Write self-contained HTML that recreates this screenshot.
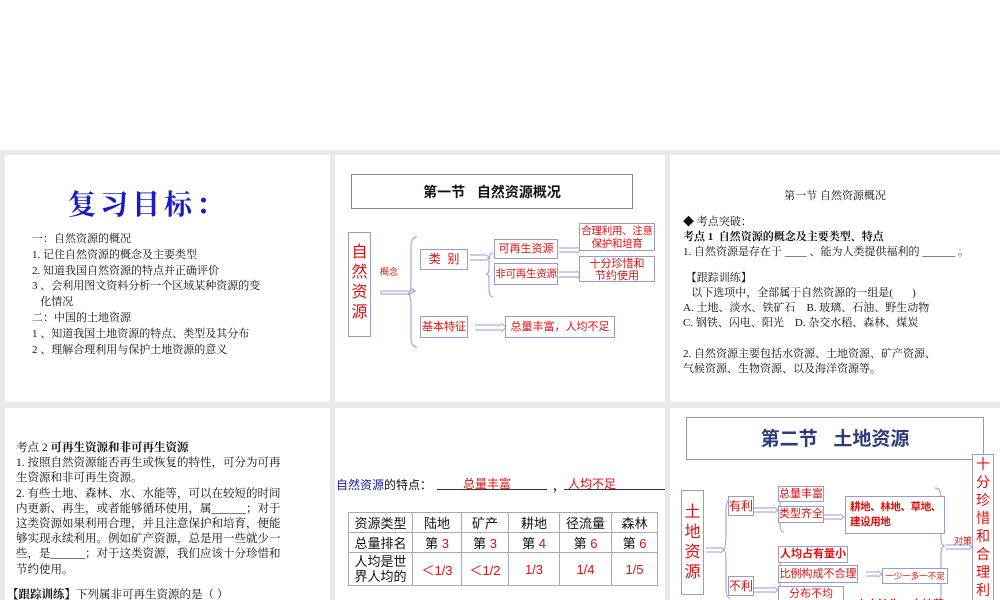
<!DOCTYPE html>
<html><head><meta charset="utf-8"><style>
*{margin:0;padding:0;box-sizing:border-box}
body{width:1000px;height:600px;overflow:hidden;background:#fff;position:relative;font-family:"Liberation Sans","Noto Sans CJK SC",sans-serif}
.bg{position:absolute;left:0;top:150px;width:1000px;height:450px;background:#e9e9e9}
.s{position:absolute;background:#fff;overflow:hidden}
.a{position:absolute;white-space:nowrap}
.k{font-family:"Liberation Serif","Noto Serif CJK SC",serif;color:#111}
.b{position:absolute;border:1px solid #9a9ad0;background:#fff;color:#e01010;font-size:11px;text-align:center;line-height:1.2;white-space:nowrap;overflow:hidden}
.r{color:#e01010}
table{border-collapse:collapse;position:absolute}
td{border:1px solid #aaa;text-align:center;font-size:13px;color:#111;padding:0}
</style></head><body>
<div class="bg"></div>
<!-- slide1 -->
<div class="s" style="left:5px;top:155px;width:325px;height:247px">
<div class="a" style="left:63px;top:28px;font-size:28px;font-weight:bold;color:#1a1acc;font-family:'Noto Serif CJK SC',serif;letter-spacing:4px">复习目标：</div>
<div class="a k" style="left:27px;top:77px;font-size:11px;line-height:15.8px">一：自然资源的概况<br>1. 记住自然资源的概念及主要类型<br>2. 知道我国自然资源的特点并正确评价<br>3 、会利用图文资料分析一个区域某种资源的变<br>&nbsp;&nbsp;&nbsp;化情况<br>二：中国的土地资源<br>1 、知道我国土地资源的特点、类型及其分布<br>2 、理解合理利用与保护土地资源的意义</div>
</div>
<!-- slide2 -->
<div class="s" style="left:335px;top:155px;width:330px;height:247px">
<div class="a" style="left:16px;top:19px;width:282px;height:35px;border:1px solid #888;text-align:center;line-height:34px;font-size:14px;font-weight:bold;color:#111">第一节&nbsp;&nbsp;&nbsp;自然资源概况</div>
<div class="b" style="left:13px;top:77px;width:23px;height:105px;font-size:16px;line-height:20px;padding-top:10px;white-space:normal">自<br>然<br>资<br>源</div>
<div class="a r" style="left:45px;top:110px;font-size:9px">概念</div>
<svg class="a" style="left:0;top:0" width="330" height="247" fill="none" stroke="#9a9ad0">
<path d="M46 136h34l-4-3M76 139l4-3M46 136v3h30"/>
<path d="M82 82q-6 0-6 10v37q0 10-4 10q4 0 4 10v33q0 10 6 10"/>
<path d="M158 98q-4 0-4 8v8q0 5-3 5q3 0 3 5v10q0 8 4 8"/>
<path d="M135 100h16M135 105h16M151 100l4 2.5-4 2.5"/><path d="M224 93h18M224 97h18M242 92l4 3-4 3"/>
<path d="M224 117h18M224 122h18M242 116l4 3.5-4 3.5"/>
<path d="M140 170h26M140 175h26M166 168l5 4.5-5 4.5"/>
</svg>
<div class="b" style="left:85px;top:94px;width:48px;height:21px;line-height:19px;font-size:12px">类&nbsp;&nbsp;别</div>
<div class="b" style="left:159px;top:84px;width:64px;height:20px;line-height:18px">可再生资源</div>
<div class="b" style="left:159px;top:108px;width:64px;height:22px;line-height:20px;font-size:10.5px;letter-spacing:-0.3px">非可再生资源</div>
<div class="b" style="left:244px;top:68px;width:76px;height:28px;font-size:10.5px;line-height:13px;padding-top:1px;letter-spacing:-0.3px">合理利用、注意<br>保护和培育</div>
<div class="b" style="left:244px;top:101px;width:76px;height:26px;line-height:12px;padding-top:1px">十分珍惜和<br>节约使用</div>
<div class="b" style="left:85px;top:161px;width:48px;height:22px;line-height:20px">基本特征</div>
<div class="b" style="left:170px;top:161px;width:110px;height:22px;line-height:20px">总量丰富，人均不足</div>
</div>
<!-- slide3 -->
<div class="s" style="left:670px;top:155px;width:330px;height:247px">
<div class="a k" style="left:0;width:330px;text-align:center;top:32px;font-size:11px">第一节 自然资源概况</div>
<div class="a k" style="left:13px;top:60px;font-size:11px;line-height:15px">◆ 考点突破：<br><b>考点 1&nbsp;&nbsp;自然资源的概念及主要类型、特点</b><br>1. 自然资源是存在于 ____ 、能为人类提供福利的 ______ 。</div>
<div class="a k" style="left:13px;top:116px;font-size:11px;line-height:15px">&nbsp;【跟踪训练】<br>&nbsp;&nbsp;&nbsp;以下选项中，全部属于自然资源的一组是(&nbsp;&nbsp;&nbsp;&nbsp;&nbsp;&nbsp;&nbsp;)<br>A. 土地、淡水、铁矿石&nbsp;&nbsp;&nbsp;&nbsp;B. 玻璃、石油、野生动物<br>C. 钢铁、闪电、阳光&nbsp;&nbsp;&nbsp;&nbsp;D. 杂交水稻、森林、煤炭</div>
<div class="a k" style="left:13px;top:192px;font-size:11px;line-height:15px">2. 自然资源主要包括水资源、土地资源、矿产资源、<br>气候资源、生物资源、以及海洋资源等。</div>
</div>
<!-- slide4 -->
<div class="s" style="left:5px;top:408px;width:325px;height:192px">
<div class="a k" style="left:11px;top:33px;font-size:11.5px;line-height:15.2px">考点 2 <b>可再生资源和非可再生资源</b><br>1. 按照自然资源能否再生或恢复的特性，可分为可再<br>生资源和非可再生资源。<br>2. 有些土地、森林、水、水能等，可以在较短的时间<br>内更新、再生，或者能够循环使用，属______；对于<br>这类资源如果利用合理，并且注意保护和培育，便能<br>够实现永续利用。例如矿产资源，总是用一些就少一<br>些，是______；对于这类资源，我们应该十分珍惜和<br>节约使用。</div>
<div class="a k" style="left:2px;top:178px;font-size:11.5px"><b>【跟踪训练】</b>下列属非可再生资源的是（ ）</div>
</div>
<!-- slide5 -->
<div class="s" style="left:335px;top:408px;width:330px;height:192px">
<div class="a" style="left:1px;top:68px;font-size:12px;color:#111"><span style="color:#1a1aaa">自然资源</span>的特点：</div>
<div class="a" style="left:102px;top:81px;width:110px;border-top:1px solid #333"></div>
<div class="a r" style="left:128px;top:67px;font-size:12px">总量丰富</div>
<div class="a" style="left:217px;top:70px;font-size:12px">，</div>
<div class="a" style="left:229px;top:81px;width:105px;border-top:1px solid #333"></div>
<div class="a r" style="left:233px;top:67px;font-size:12px">人均不足</div>
<table style="left:13px;top:104px;width:310px">
<tr style="height:19px"><td style="width:64px">资源类型</td><td style="width:49px">陆地</td><td style="width:47px">矿产</td><td style="width:51px">耕地</td><td style="width:52px">径流量</td><td>森林</td></tr>
<tr style="height:19px"><td>总量排名</td><td>第 <span class="r">3</span></td><td>第 <span class="r">3</span></td><td>第 <span class="r">4</span></td><td>第 <span class="r">6</span></td><td>第 <span class="r">6</span></td></tr>
<tr style="height:33px"><td style="line-height:15px">人均是世<br>界人均的</td><td style="color:#e01010">＜1/3</td><td style="color:#e01010">＜1/2</td><td style="color:#e01010">1/3</td><td style="color:#e01010">1/4</td><td style="color:#e01010">1/5</td></tr>
</table>
</div>
<!-- slide6 -->
<div class="s" style="left:670px;top:408px;width:330px;height:192px">
<div class="a" style="left:16px;top:9px;width:298px;height:43px;border:1px solid #999;text-align:center;line-height:44px;font-size:19px;font-weight:bold;color:#2a3a7a">第二节&nbsp;&nbsp;&nbsp;土地资源</div>
<div class="b" style="left:11px;top:82px;width:23px;height:105px;font-size:16px;line-height:20px;padding-top:12px">土<br>地<br>资<br>源</div>
<div class="b" style="left:302px;top:46px;width:22px;height:150px;font-size:14px;line-height:18px;padding-top:0">十<br>分<br>珍<br>惜<br>和<br>合<br>理<br>利<br>用<br>每<br>一</div>
<svg class="a" style="left:0;top:0" width="330" height="192" fill="none" stroke="#9a9ad0">
<path d="M36 140h14M36 144h14M50 139l4 3-4 3"/>
<path d="M60 92q-4 0-4 10v25q0 14-3 14q3 0 3 14v25q0 10 4 10"/>
<path d="M84 100h20M84 104h20M104 99l4 3-4 3"/><path d="M84 180h20M84 184h20M104 179l4 3-4 3"/>
<path d="M114 80q-4 0-4 8v10q0 2-2 2q2 0 2 2v14q0 8 4 8"/>
<path d="M114 150q-4 0-4 8v40"/>
<path d="M196 164h12M196 168h12M208 163l4 3-4 3"/>
<path d="M154 107h16M154 111h16M170 106l4 3-4 3"/>
<path d="M265 80q6 0 6 10v40q0 8 4 8q-4 0-4 8v50"/>
<path d="M276 137h22M276 141h22M298 136l4 3-4 3"/>
</svg>
<div class="b" style="left:58px;top:88px;width:26px;height:20px;line-height:18px;font-size:12px">有利</div>
<div class="b" style="left:58px;top:168px;width:26px;height:20px;line-height:18px;font-size:12px">不利</div>
<div class="b" style="left:108px;top:78px;width:46px;height:16px;line-height:14px">总量丰富</div>
<div class="b" style="left:108px;top:98px;width:46px;height:17px;line-height:15px">类型齐全</div>
<div class="b" style="left:175px;top:88px;width:100px;height:38px;text-align:left;padding:3px 0 0 4px;line-height:15px;font-weight:bold;font-size:10.5px;letter-spacing:-0.4px">耕地、林地、草地、<br>建设用地</div>
<div class="a r" style="left:284px;top:126px;font-size:9px">对策</div>
<div class="b" style="left:108px;top:138px;width:70px;height:17px;line-height:15px;font-weight:bold">人均占有量小</div>
<div class="b" style="left:108px;top:157px;width:80px;height:18px;line-height:16px">比例构成不合理</div>
<div class="b" style="left:212px;top:160px;width:66px;height:16px;line-height:14px;font-size:8.5px">一少一多一不足</div>
<div class="b" style="left:108px;top:178px;width:66px;height:17px;line-height:15px">分布不均</div>
<div class="a r" style="left:186px;top:188px;font-size:11px;font-weight:bold">水土流失、土地荒</div>
</div>
</body></html>
